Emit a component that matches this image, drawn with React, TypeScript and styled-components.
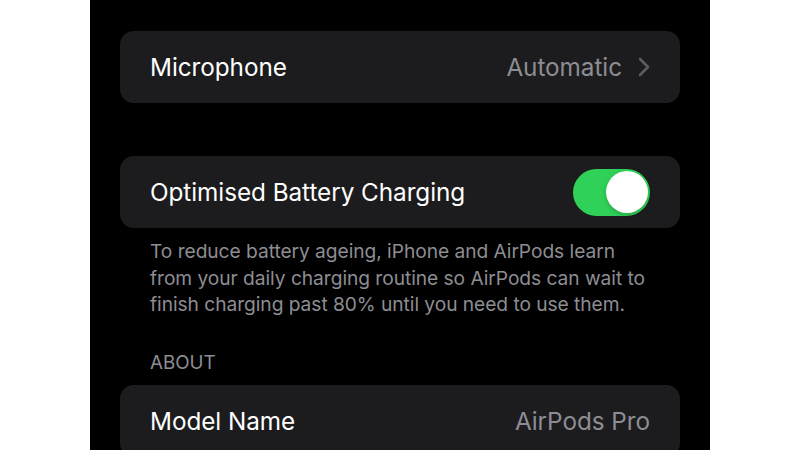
import React from "react";
import styled, { createGlobalStyle } from "styled-components";

const Global = createGlobalStyle`
  html, body { margin: 0; padding: 0; background: #ffffff; }
  body { font-family: Inter, "Noto Sans", "Liberation Sans", sans-serif; -webkit-font-smoothing: antialiased; }
`;

const Page = styled.div`
  width: 800px;
  height: 450px;
  overflow: hidden;
  background: #ffffff;
  display: flex;
`;

const Screen = styled.div`
  margin-left: 90px;
  width: 620px;
  height: 450px;
  background: #000000;
  box-sizing: border-box;
  padding: 31px 30px 0;
  display: flex;
  flex-direction: column;
`;

const Card = styled.div<{ $mt?: number }>`
  background: #1c1c1e;
  border-radius: 14px;
  margin-top: ${(p) => p.$mt ?? 0}px;
  overflow: hidden;
  flex-shrink: 0;
`;

const Row = styled.div`
  height: 72px;
  box-sizing: border-box;
  padding: 0 30px;
  display: flex;
  align-items: center;
  justify-content: space-between;
`;

const Label = styled.span`
  color: #ffffff;
  font-size: 24.3px;
  letter-spacing: -0.05px;
`;

const Value = styled.span`
  color: #8d8d93;
  font-size: 24.3px;
  letter-spacing: -0.05px;
  display: flex;
  align-items: center;
  gap: 16px;
`;

const Footer = styled.p`
  margin: 10px 0 0;
  padding: 0 20px 0 30px;
  color: #8d8d93;
  font-size: 19.2px;
  line-height: 26.5px;
  letter-spacing: -0.05px;
  white-space: nowrap;
`;

const SectionHeader = styled.div`
  margin-top: 33px;
  padding: 0 30px;
  color: #8d8d93;
  font-size: 18.8px;
  line-height: 24px;
`;

const Switch = styled.div<{ $on: boolean }>`
  width: 77px;
  height: 47px;
  border-radius: 24px;
  background: ${(p) => (p.$on ? "#30d158" : "#39393d")};
  position: relative;
  flex-shrink: 0;
`;

const Knob = styled.div<{ $on: boolean }>`
  position: absolute;
  top: 2.5px;
  left: ${(p) => (p.$on ? "32.5px" : "2.5px")};
  width: 42px;
  height: 42px;
  border-radius: 50%;
  background: #ffffff;
  box-shadow: 0 2px 5px rgba(0, 0, 0, 0.2);
`;

const Chevron = () => (
  <svg width="12" height="20" viewBox="0 0 12 20" fill="none">
    <polyline
      points="2,2 10,10 2,18"
      stroke="#5b5b60"
      strokeWidth="2.6"
      strokeLinecap="round"
      strokeLinejoin="round"
    />
  </svg>
);

export default function App() {
  return (
    <>
      <Global />
      <Page>
        <Screen>
          <Card>
            <Row>
              <Label>Microphone</Label>
              <Value>
                Automatic
                <Chevron />
              </Value>
            </Row>
          </Card>
          <Card $mt={53}>
            <Row>
              <Label>Optimised Battery Charging</Label>
              <Switch $on>
                <Knob $on />
              </Switch>
            </Row>
          </Card>
          <Footer>
            To reduce battery ageing, iPhone and AirPods learn
            <br />
            from your daily charging routine so AirPods can wait to
            <br />
            finish charging past 80% until you need to use them.
          </Footer>
          <SectionHeader>ABOUT</SectionHeader>
          <Card $mt={10}>
            <Row>
              <Label>Model Name</Label>
              <Value>AirPods Pro</Value>
            </Row>
          </Card>
        </Screen>
      </Page>
    </>
  );
}
